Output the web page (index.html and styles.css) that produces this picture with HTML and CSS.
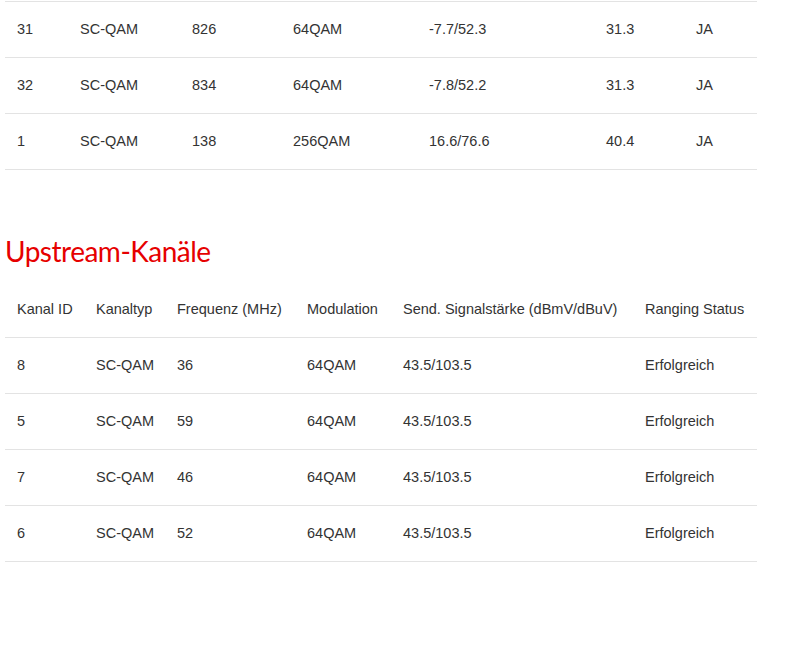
FILE: index.html
```html
<!DOCTYPE html>
<html lang="de">
<head>
<meta charset="utf-8">
<title>Kanäle</title>
<link rel="stylesheet" href="styles.css">
</head>
<body>
<div class="page">
  <table class="grid down">
    <colgroup>
      <col class="d1"><col class="d2"><col class="d3"><col class="d4"><col class="d5"><col class="d6"><col class="d7">
    </colgroup>
    <tbody>
      <tr><td>31</td><td>SC-QAM</td><td>826</td><td>64QAM</td><td>-7.7/52.3</td><td>31.3</td><td>JA</td></tr>
      <tr><td>32</td><td>SC-QAM</td><td>834</td><td>64QAM</td><td>-7.8/52.2</td><td>31.3</td><td>JA</td></tr>
      <tr><td>1</td><td>SC-QAM</td><td>138</td><td>256QAM</td><td>16.6/76.6</td><td>40.4</td><td>JA</td></tr>
    </tbody>
  </table>

  <h2 class="section-title">Upstream-Kanäle</h2>

  <table class="grid up">
    <colgroup>
      <col class="u1"><col class="u2"><col class="u3"><col class="u4"><col class="u5"><col class="u6">
    </colgroup>
    <thead>
      <tr><th>Kanal ID</th><th>Kanaltyp</th><th>Frequenz (MHz)</th><th>Modulation</th><th>Send. Signalstärke (dBmV/dBuV)</th><th>Ranging Status</th></tr>
    </thead>
    <tbody>
      <tr><td>8</td><td>SC-QAM</td><td>36</td><td>64QAM</td><td>43.5/103.5</td><td>Erfolgreich</td></tr>
      <tr><td>5</td><td>SC-QAM</td><td>59</td><td>64QAM</td><td>43.5/103.5</td><td>Erfolgreich</td></tr>
      <tr><td>7</td><td>SC-QAM</td><td>46</td><td>64QAM</td><td>43.5/103.5</td><td>Erfolgreich</td></tr>
      <tr><td>6</td><td>SC-QAM</td><td>52</td><td>64QAM</td><td>43.5/103.5</td><td>Erfolgreich</td></tr>
    </tbody>
  </table>
</div>
</body>
</html>
```

FILE: styles.css
```css
html, body {
  margin: 0;
  padding: 0;
  background: #fff;
}

body {
  font-family: "Liberation Sans", Arial, sans-serif;
  font-size: 14.5px;
  line-height: 20px;
  color: #333;
}

.page {
  padding: 0 0 0 5px;
  width: 752px;
}

.grid {
  width: 752px;
  border-collapse: collapse;
  table-layout: fixed;
}

.grid td,
.grid th {
  padding: 17px 12px 18px 12px;
  text-align: left;
  font-weight: normal;
  border-bottom: 1px solid #e3e3e3;
  white-space: nowrap;
  vertical-align: top;
}

.down {
  margin-top: 1px;
  border-top: 1px solid #e3e3e3;
}

.up th {
  padding-top: 18px;
}

.d1 { width: 63px; }
.d2 { width: 112px; }
.d3 { width: 101px; }
.d4 { width: 136px; }
.d5 { width: 177px; }
.d6 { width: 90px; }
.d7 { width: 73px; }

.u1 { width: 79px; }
.u2 { width: 81px; }
.u3 { width: 130px; }
.u4 { width: 96px; }
.u5 { width: 242px; }
.u6 { width: 124px; }

.section-title {
  margin: 65px 0 14px 0;
  font-family: Lato, "Open Sans", sans-serif;
  font-weight: normal;
  font-size: 28px;
  letter-spacing: -0.5px;
  line-height: 32px;
  color: #e60000;
}
```
